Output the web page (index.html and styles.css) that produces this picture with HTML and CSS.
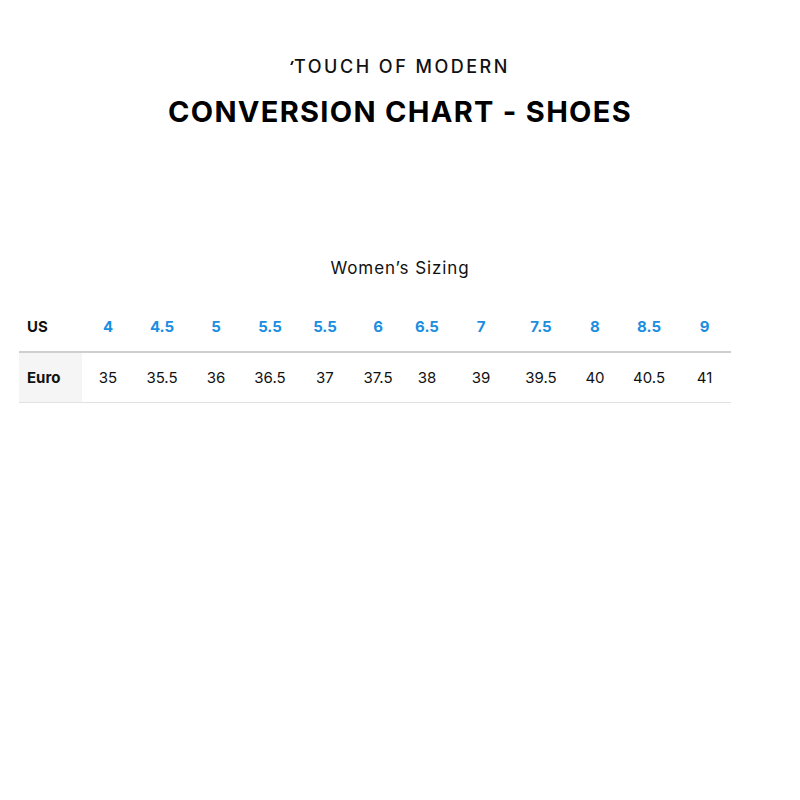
FILE: index.html
```html
<!DOCTYPE html>
<html lang="en">
<head>
<meta charset="utf-8">
<title>Conversion Chart - Shoes</title>
<link rel="stylesheet" href="styles.css">
</head>
<body>
<div class="page">
  <header class="head">
    <div class="brand"><span class="brand-t">T</span>OUCH OF MODERN</div>
    <h1 class="title">CONVERSION CHART - SHOES</h1>
  </header>
  <section class="sizing">
    <h2 class="subtitle">Women’s Sizing</h2>
    <div class="chart">
      <div class="cell label head-row">US</div>
      <div class="cell us head-row">4</div>
      <div class="cell us head-row">4.5</div>
      <div class="cell us head-row">5</div>
      <div class="cell us head-row">5.5</div>
      <div class="cell us head-row">5.5</div>
      <div class="cell us head-row">6</div>
      <div class="cell us head-row">6.5</div>
      <div class="cell us head-row">7</div>
      <div class="cell us head-row">7.5</div>
      <div class="cell us head-row">8</div>
      <div class="cell us head-row">8.5</div>
      <div class="cell us head-row">9</div>

      <div class="cell label body-row shaded">Euro</div>
      <div class="cell body-row">35</div>
      <div class="cell body-row">35.5</div>
      <div class="cell body-row">36</div>
      <div class="cell body-row">36.5</div>
      <div class="cell body-row">37</div>
      <div class="cell body-row">37.5</div>
      <div class="cell body-row">38</div>
      <div class="cell body-row">39</div>
      <div class="cell body-row">39.5</div>
      <div class="cell body-row">40</div>
      <div class="cell body-row">40.5</div>
      <div class="cell body-row">41</div>
    </div>
  </section>
</div>
</body>
</html>
```

FILE: styles.css
```css
html, body {
  margin: 0;
  padding: 0;
  background: #ffffff;
}

body {
  font-family: "Inter", "Liberation Sans", sans-serif;
  color: #111111;
}

.page {
  width: 800px;
  padding-top: 54px;
}

.head {
  display: flex;
  flex-direction: column;
  align-items: center;
}

.brand {
  font-size: 18px;
  font-weight: 500;
  letter-spacing: 2.5px;
  line-height: 26px;
  color: #111;
  padding-left: 4px;
}

.brand-t {
  position: relative;
}

.brand-t::before {
  content: "";
  position: absolute;
  left: -3px;
  top: 5px;
  width: 2px;
  height: 4px;
  background: #111;
  transform: skewX(-20deg);
}

.title {
  margin: 14px 0 0;
  font-size: 29px;
  font-weight: 700;
  letter-spacing: 1.3px;
  line-height: 36px;
  color: #000;
}

.sizing {
  margin-top: 126px;
  display: flex;
  flex-direction: column;
  align-items: center;
}

.subtitle {
  margin: 0;
  font-size: 17px;
  font-weight: 400;
  line-height: 24px;
  letter-spacing: 0.9px;
  color: #111;
}

.chart {
  align-self: flex-start;
  margin-left: 19px;
  margin-top: 22px;
  display: grid;
  grid-template-columns: 63px 52px 56px 52px 56px 54px 52px 46px 62px 58px 50px 58px 53px;
}

.cell {
  display: flex;
  align-items: center;
  justify-content: center;
  font-size: 15px;
  height: 49px;
}

.label {
  justify-content: flex-start;
  padding-left: 8px;
  font-weight: 700;
  color: #111;
}

.us {
  color: #1b8ee0;
  font-weight: 700;
}

.head-row {
  border-bottom: 2px solid #cfcfcf;
}

.body-row {
  border-bottom: 1px solid #e2e2e2;
  color: #111;
}

.shaded {
  background: #f5f5f5;
}
```
